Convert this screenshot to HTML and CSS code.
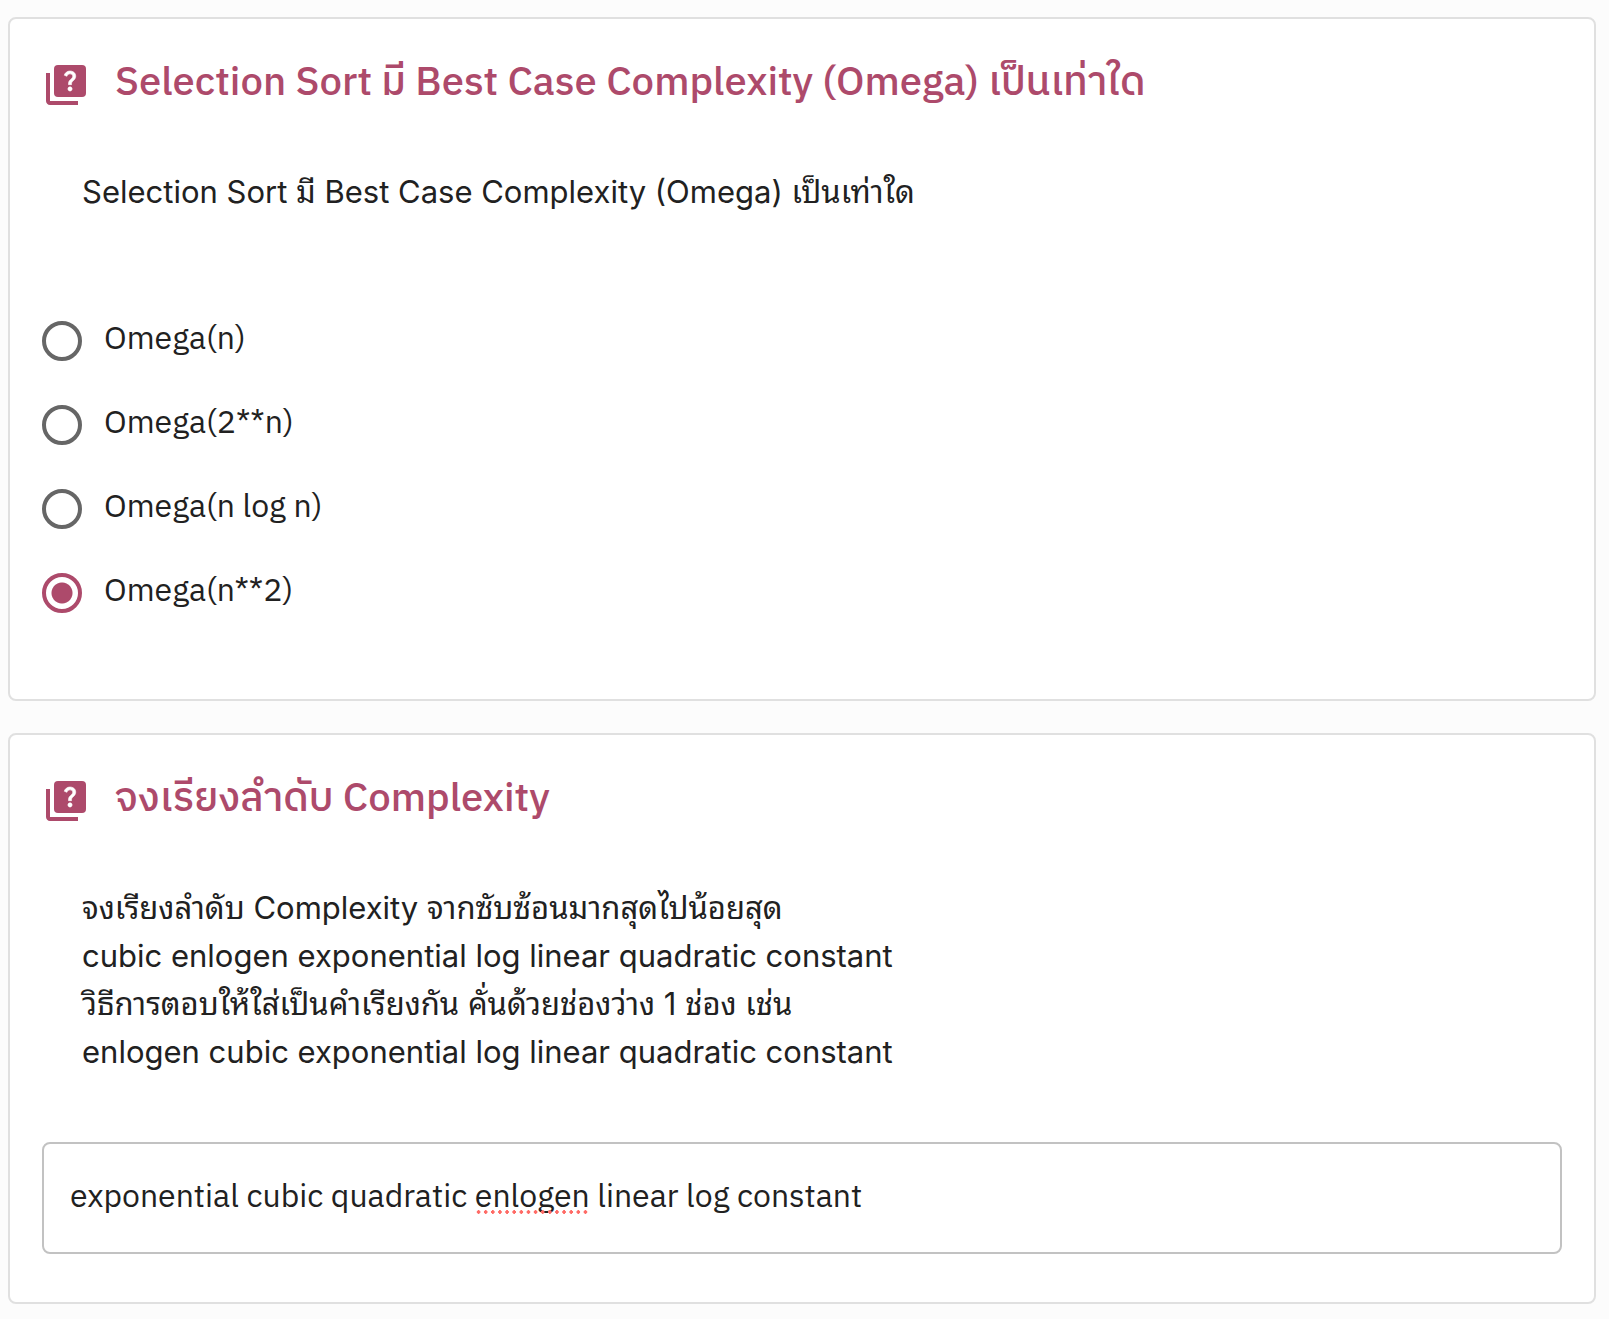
FILE: index.html
```html
<!DOCTYPE html>
<html lang="th">
<head>
<meta charset="utf-8">
<meta name="viewport" content="width=device-width, initial-scale=1">
<title>Complexity</title>
<link rel="stylesheet" href="styles.css">
</head>
<body>
<svg class="sprite" aria-hidden="true">
  <symbol id="quiz" viewBox="0 0 24 24">
    <path d="M4 6H2v14c0 1.100.9 2 2 2h14v-2H4V6z"/>
    <rect x="6" y="2" width="16" height="16" rx="2"/>
    <path fill="#fff" stroke="#fff" stroke-width=".3" d="M14.010 15c-.59 0-1.050-.47-1.050-1.050 0-.59.47-1.040 1.050-1.040.59 0 1.040.45 1.040 1.040-.01.58-.45 1.050-1.040 1.050zm2.500-6.170c-.63.93-1.230 1.210-1.560 1.810-.13.24-.18.4-.18 1.180h-1.520c0-.41-.06-1.080.26-1.650.41-.73 1.180-1.160 1.630-1.800.48-.68.21-1.940-1.140-1.940-.88 0-1.320.67-1.500 1.230l-1.370-.57C11.510 5.960 12.520 5 13.990 5c1.230 0 2.080.56 2.510 1.260.37.6.58 1.730.01 2.570z"/>
  </symbol>
</svg>
<main class="quiz">
  <section class="card">
    <header class="card-header">
      <svg class="icon" aria-hidden="true"><use href="#quiz"/></svg>
      <h2 class="title" id="q1">Selection Sort มี Best Case Complexity (Omega) เป็นเท่าใด</h2>
    </header>
    <p class="prompt">Selection Sort มี Best Case Complexity (Omega) เป็นเท่าใด</p>
    <div class="options" role="radiogroup" aria-labelledby="q1">
      <label class="option"><input class="radio" type="radio" name="omega"><span>Omega(n)</span></label>
      <label class="option"><input class="radio" type="radio" name="omega"><span>Omega(2**n)</span></label>
      <label class="option"><input class="radio" type="radio" name="omega"><span>Omega(n log n)</span></label>
      <label class="option"><input class="radio" type="radio" name="omega" checked><span>Omega(n**2)</span></label>
    </div>
  </section>
  <section class="card">
    <header class="card-header">
      <svg class="icon" aria-hidden="true"><use href="#quiz"/></svg>
      <h2 class="title" id="q2">จงเรียงลำดับ Complexity</h2>
    </header>
    <p class="prompt">จงเรียงลำดับ Complexity จากซับซ้อนมากสุดไปน้อยสุด<br>
      cubic enlogen exponential log linear quadratic constant<br>
      วิธีการตอบให้ใส่เป็นคำเรียงกัน คั่นด้วยช่องว่าง 1 ช่อง เช่น<br>
      enlogen cubic exponential log linear quadratic constant</p>
    <div class="field">
      <input class="answer" type="text" aria-labelledby="q2" value="exponential cubic quadratic enlogen linear log constant">
      <span class="misspelling"></span>
    </div>
  </section>
</main>
</body>
</html>
```
FILE: styles.css
```css
* { box-sizing: border-box; }

body {
  margin: 0;
  background: #fcfcfc;
  color: #212121;
  font-family: "IBM Plex Sans Thai", "Noto Sans", "Noto Sans Thai", sans-serif;
}

.sprite { display: none; }

.quiz {
  display: flex;
  flex-direction: column;
  gap: 32px;
  padding: 17px 13px 14px 8px;
}

.card {
  padding: 29px 32px 48px;
  border: 2px solid #e0e0e0;
  border-radius: 8px;
  background: #fff;
}

.card-header {
  display: flex;
  align-items: center;
  gap: 25px;
  height: 64px;
}

.icon {
  flex: none;
  width: 48px;
  height: 48px;
  margin-top: 10px;
  fill: #ad4a6b;
}

.title {
  margin: 6px 0 0;
  color: #ad4a6b;
  font-size: 40px;
  font-weight: 500;
  line-height: 64px;
}

.prompt {
  margin: 0;
  padding: 56px 40px 66px;
  font-family: Inter, "Noto Sans Thai Looped", "Noto Looped Thai", Loma, "Noto Sans Thai", sans-serif;
  font-size: 31px;
  line-height: 48px;
}

.options {
  display: flex;
  flex-direction: column;
  gap: 36px;
  padding: 34px 0 35px;
}

.option {
  display: flex;
  align-items: center;
  gap: 22px;
  height: 48px;
  font-size: 32px;
  line-height: 48px;
}

.radio {
  flex: none;
  appearance: none;
  width: 40px;
  height: 40px;
  margin: 2px 0 0;
  border: 4px solid #666;
  border-radius: 50%;
}

.radio:checked {
  border-color: #ad4a6b;
  background: radial-gradient(circle, #ad4a6b 10px, transparent 11px);
}

.field { position: relative; }

.answer {
  display: block;
  width: 100%;
  height: 112px;
  padding: 0 26px 2px;
  border: 2px solid #c2c2c2;
  border-radius: 8px;
  background: #fff;
  color: inherit;
  font-family: inherit;
  font-size: 32px;
}

/* dotted rule under the word the spell checker flags */
.misspelling {
  position: absolute;
  left: 433px;
  top: 68px;
  width: 114px;
  height: 4px;
  background: radial-gradient(circle, #ff6b66 2px, transparent 2px) 0 0 / 7px 4px round;
  pointer-events: none;
}
```
